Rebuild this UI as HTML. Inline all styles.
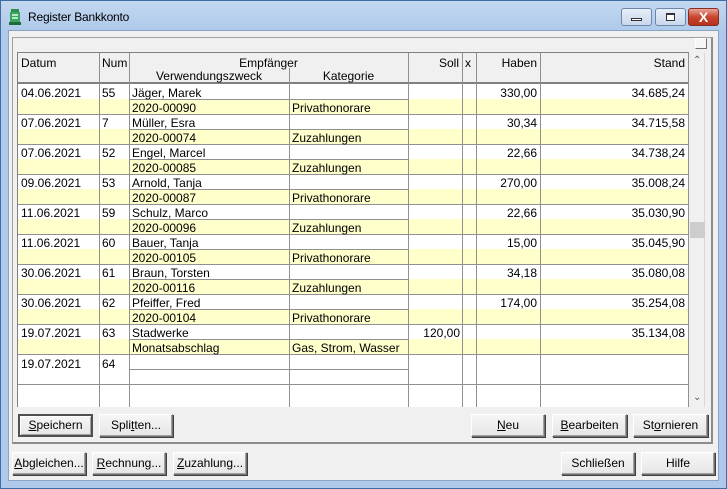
<!DOCTYPE html>
<html><head><meta charset="utf-8"><style>
*{box-sizing:border-box;margin:0;padding:0}
body{width:727px;height:489px;overflow:hidden;background:#a9c6e8;font-family:"Liberation Sans",Arial,sans-serif;font-size:12px;color:#000;position:relative}
.a{position:absolute}
.win{left:0;top:0;width:727px;height:489px;border:1px solid #3e6ca3;background:linear-gradient(#c3d8f0,#aec9ea 30px,#aec9ea)}
.title{left:28px;top:10px;font-size:12px;letter-spacing:-0.2px}
.panel{left:8px;top:30px;width:711px;height:451px;background:#f0f0f0;border:1px solid #8aa4c4}
.grp{left:12px;top:37px;width:701px;height:407px;border-top:1px solid #a0a0a0;border-left:1px solid #a0a0a0;border-right:2px solid #8c8c8c;border-bottom:2px solid #8c8c8c}
.tbl{left:17px;top:52px;width:672px;height:355px;background:#fff;border-left:1px solid #808080;border-top:1px solid #808080}
.hdr{left:18px;top:53px;width:670px;height:31px;background:#f0f0f0;border-bottom:2px solid #808080}
.v{width:1px;background:#909090}
.rec{left:18px;width:671px;height:31px;border-bottom:1px solid #909090}
.rec .y{position:absolute;left:0;top:15px;width:670px;height:15px;background:#ffffcc}
.h{height:1px;background:#909090;left:129px;width:279px}
.t{position:absolute;line-height:15px;white-space:nowrap;margin-top:1px}
.r{text-align:right}
.btn{position:absolute;height:23px;background:linear-gradient(#f6f6f6,#e6e6e6);border:1px solid #707070;border-top-color:#fff;border-left-color:#fff;box-shadow:1px 1px 0 #404040, inset -1px -1px 0 #a0a0a0;text-align:center;line-height:21px}
.btn.def{border:2px solid #505050;box-shadow:inset 1px 1px 0 #fff,inset -1px -1px 0 #a0a0a0;line-height:19px}
u{text-decoration:underline}
.wb{position:absolute;top:8px;height:18px;border:1px solid #6d87a8;border-radius:3px;background:linear-gradient(#e6eef8,#c9d8ec)}
</style></head><body>
<div class="a win"></div>
<svg class="a" style="left:9px;top:9px" width="12" height="16"><rect x="2" y="0" width="8" height="3" fill="#2f8f4f"/><rect x="1" y="3" width="10" height="10" fill="#3aa35e"/><rect x="3" y="5" width="6" height="2" fill="#b8e6c6"/><rect x="3" y="8" width="6" height="2" fill="#b8e6c6"/><rect x="0" y="13" width="12" height="3" fill="#1f6b3a"/></svg>
<div class="a title">Register Bankkonto</div>
<div class="wb" style="left:621px;width:31px"><div class="a" style="left:9px;top:9px;width:11px;height:3px;background:#fff;border:1px solid #333"></div></div>
<div class="wb" style="left:655px;width:31px"><div class="a" style="left:10px;top:4px;width:9px;height:8px;border:1px solid #333;border-top-width:2px;background:#fff"></div></div>
<div class="wb" style="left:688px;width:31px;border-color:#8b2b22;background:linear-gradient(#e9a598,#c8452f 50%,#b5321e)"><div class="a" style="left:0;top:-1px;width:29px;text-align:center;color:#fff;font-weight:bold;font-size:14px;line-height:18px">X</div></div>

<div class="a panel"></div>
<div class="a grp"></div>
<div class="a" style="left:695px;top:38px;width:12px;height:11px;background:#f6f6f6;border:1px solid #fff;border-right-color:#707070;border-bottom-color:#707070"></div>
<div class="a tbl"></div>
<div class="a hdr"></div>
<div class="a" style="left:689px;top:53px;width:16px;height:354px;background:#f0f0f0;border-right:1px solid #d8d8d8"></div>
<div class="a" style="left:690px;top:222px;width:15px;height:16px;background:#cdcdcd"></div>
<div class="a" style="left:693px;top:55px;font-size:10px;color:#555">&#8963;</div>
<div class="a" style="left:693px;top:392px;font-size:10px;color:#555">&#8964;</div>

<div class="t" style="left:21px;top:55px">Datum</div>
<div class="t" style="left:102px;top:55px">Num</div>
<div class="t" style="left:129px;top:55px;width:279px;text-align:center">Empfänger</div>
<div class="t" style="left:129px;top:68px;width:160px;text-align:center">Verwendungszweck</div>
<div class="t" style="left:289px;top:68px;width:119px;text-align:center">Kategorie</div>
<div class="t r" style="left:408px;top:55px;width:51px">Soll</div>
<div class="t" style="left:465px;top:55px">x</div>
<div class="t r" style="left:476px;top:55px;width:61px">Haben</div>
<div class="t r" style="left:540px;top:55px;width:145px">Stand</div>

<div class="a rec" style="top:84px"><div class="y"></div></div>
<div class="a rec" style="top:114px"><div class="y"></div></div>
<div class="a rec" style="top:144px"><div class="y"></div></div>
<div class="a rec" style="top:174px"><div class="y"></div></div>
<div class="a rec" style="top:204px"><div class="y"></div></div>
<div class="a rec" style="top:234px"><div class="y"></div></div>
<div class="a rec" style="top:264px"><div class="y"></div></div>
<div class="a rec" style="top:294px"><div class="y"></div></div>
<div class="a rec" style="top:324px"><div class="y"></div></div>
<div class="a rec" style="top:354px;border-bottom-color:#909090"></div>

<div class="a h" style="top:99px"></div><div class="a h" style="top:129px"></div><div class="a h" style="top:159px"></div><div class="a h" style="top:189px"></div><div class="a h" style="top:219px"></div><div class="a h" style="top:249px"></div><div class="a h" style="top:279px"></div><div class="a h" style="top:309px"></div><div class="a h" style="top:339px"></div><div class="a h" style="top:369px"></div>

<div class="a v" style="left:99px;top:53px;height:354px"></div>
<div class="a v" style="left:129px;top:53px;height:354px"></div>
<div class="a v" style="left:289px;top:68px;height:339px"></div>
<div class="a v" style="left:408px;top:53px;height:354px"></div>
<div class="a v" style="left:462px;top:53px;height:354px"></div>
<div class="a v" style="left:476px;top:53px;height:354px"></div>
<div class="a v" style="left:540px;top:53px;height:354px"></div>
<div class="a v" style="left:688px;top:53px;height:354px"></div>

<div class="t" style="left:21px;top:85px">04.06.2021</div><div class="t" style="left:102px;top:85px">55</div><div class="t" style="left:132px;top:85px">Jäger, Marek</div><div class="t r" style="left:476px;top:85px;width:61px">330,00</div><div class="t r" style="left:540px;top:85px;width:145px">34.685,24</div>
<div class="t" style="left:132px;top:100px">2020-00090</div><div class="t" style="left:292px;top:100px">Privathonorare</div>

<div class="t" style="left:21px;top:115px">07.06.2021</div><div class="t" style="left:102px;top:115px">7</div><div class="t" style="left:132px;top:115px">Müller, Esra</div><div class="t r" style="left:476px;top:115px;width:61px">30,34</div><div class="t r" style="left:540px;top:115px;width:145px">34.715,58</div>
<div class="t" style="left:132px;top:130px">2020-00074</div><div class="t" style="left:292px;top:130px">Zuzahlungen</div>

<div class="t" style="left:21px;top:145px">07.06.2021</div><div class="t" style="left:102px;top:145px">52</div><div class="t" style="left:132px;top:145px">Engel, Marcel</div><div class="t r" style="left:476px;top:145px;width:61px">22,66</div><div class="t r" style="left:540px;top:145px;width:145px">34.738,24</div>
<div class="t" style="left:132px;top:160px">2020-00085</div><div class="t" style="left:292px;top:160px">Zuzahlungen</div>

<div class="t" style="left:21px;top:175px">09.06.2021</div><div class="t" style="left:102px;top:175px">53</div><div class="t" style="left:132px;top:175px">Arnold, Tanja</div><div class="t r" style="left:476px;top:175px;width:61px">270,00</div><div class="t r" style="left:540px;top:175px;width:145px">35.008,24</div>
<div class="t" style="left:132px;top:190px">2020-00087</div><div class="t" style="left:292px;top:190px">Privathonorare</div>

<div class="t" style="left:21px;top:205px">11.06.2021</div><div class="t" style="left:102px;top:205px">59</div><div class="t" style="left:132px;top:205px">Schulz, Marco</div><div class="t r" style="left:476px;top:205px;width:61px">22,66</div><div class="t r" style="left:540px;top:205px;width:145px">35.030,90</div>
<div class="t" style="left:132px;top:220px">2020-00096</div><div class="t" style="left:292px;top:220px">Zuzahlungen</div>

<div class="t" style="left:21px;top:235px">11.06.2021</div><div class="t" style="left:102px;top:235px">60</div><div class="t" style="left:132px;top:235px">Bauer, Tanja</div><div class="t r" style="left:476px;top:235px;width:61px">15,00</div><div class="t r" style="left:540px;top:235px;width:145px">35.045,90</div>
<div class="t" style="left:132px;top:250px">2020-00105</div><div class="t" style="left:292px;top:250px">Privathonorare</div>

<div class="t" style="left:21px;top:265px">30.06.2021</div><div class="t" style="left:102px;top:265px">61</div><div class="t" style="left:132px;top:265px">Braun, Torsten</div><div class="t r" style="left:476px;top:265px;width:61px">34,18</div><div class="t r" style="left:540px;top:265px;width:145px">35.080,08</div>
<div class="t" style="left:132px;top:280px">2020-00116</div><div class="t" style="left:292px;top:280px">Zuzahlungen</div>

<div class="t" style="left:21px;top:295px">30.06.2021</div><div class="t" style="left:102px;top:295px">62</div><div class="t" style="left:132px;top:295px">Pfeiffer, Fred</div><div class="t r" style="left:476px;top:295px;width:61px">174,00</div><div class="t r" style="left:540px;top:295px;width:145px">35.254,08</div>
<div class="t" style="left:132px;top:310px">2020-00104</div><div class="t" style="left:292px;top:310px">Privathonorare</div>

<div class="t" style="left:21px;top:325px">19.07.2021</div><div class="t" style="left:102px;top:325px">63</div><div class="t" style="left:132px;top:325px">Stadwerke</div><div class="t r" style="left:408px;top:325px;width:52px">120,00</div><div class="t r" style="left:540px;top:325px;width:145px">35.134,08</div>
<div class="t" style="left:132px;top:340px">Monatsabschlag</div><div class="t" style="left:292px;top:340px">Gas, Strom, Wasser</div>

<div class="t" style="left:21px;top:356px">19.07.2021</div><div class="t" style="left:102px;top:356px">64</div>

<div class="btn def" style="left:18px;top:414px;width:75px"><u>S</u>peichern</div>
<div class="btn" style="left:99px;top:414px;width:74px">Spli<u>t</u>ten...</div>
<div class="btn" style="left:471px;top:414px;width:74px"><u>N</u>eu</div>
<div class="btn" style="left:552px;top:414px;width:75px"><u>B</u>earbeiten</div>
<div class="btn" style="left:633px;top:414px;width:75px">St<u>o</u>rnieren</div>

<div class="btn" style="left:12px;top:452px;width:74px"><u>A</u>bgleichen...</div>
<div class="btn" style="left:92px;top:452px;width:74px"><u>R</u>echnung...</div>
<div class="btn" style="left:173px;top:452px;width:74px"><u>Z</u>uzahlung...</div>
<div class="btn" style="left:561px;top:452px;width:74px">Schließen</div>
<div class="btn" style="left:641px;top:452px;width:74px">Hilfe</div>
</body></html>
